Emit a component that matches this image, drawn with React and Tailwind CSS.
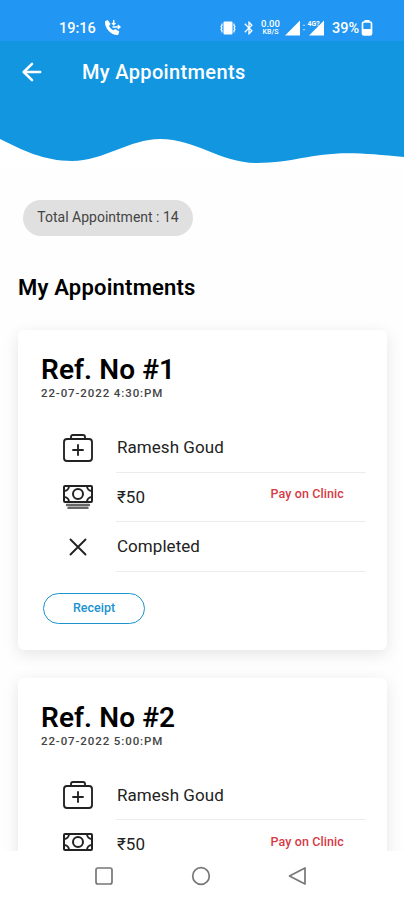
import { ArrowLeft } from 'lucide-react';
import { MdBluetooth } from 'react-icons/md';

const appointments = [
  { id: 1, date: '22-07-2022 4:30:PM', doctor: 'Ramesh Goud', price: '₹50', payment: 'Pay on Clinic', status: 'Completed' },
  { id: 2, date: '22-07-2022 5:00:PM', doctor: 'Ramesh Goud', price: '₹50', payment: 'Pay on Clinic' },
];

function MedkitIcon() {
  return (
    <svg viewBox="0 0 512 512" className="size-8" fill="none" stroke="#222" strokeWidth="30" strokeLinejoin="round">
      <rect x="32" y="112" width="448" height="352" rx="48" />
      <path d="M144 112V80a32 32 0 0 1 32-32h160a32 32 0 0 1 32 32v32" />
      <path strokeLinecap="round" d="M256 208v160M336 288H176" />
    </svg>
  );
}

function CashIcon() {
  return (
    <svg viewBox="0 0 512 512" className="size-8" fill="none" stroke="#222" strokeWidth="32" strokeLinejoin="round">
      <rect x="32" y="80" width="448" height="256" rx="16" />
      <path strokeLinecap="round" stroke="#666" strokeWidth="38" d="M80 384h352M104 430h304" />
      <circle cx="256" cy="208" r="80" />
      <path d="M480 160a80 80 0 0 1-80-80M32 160a80 80 0 0 0 80-80M480 256a80 80 0 0 0-80 80M32 256a80 80 0 0 1 80 80" />
    </svg>
  );
}

function CloseIcon() {
  return (
    <svg viewBox="0 0 512 512" className="size-8" fill="none" stroke="#222" strokeWidth="30" strokeLinecap="round">
      <path d="M376 376 136 136M376 136 136 376" />
    </svg>
  );
}

function CallIcon() {
  return (
    <svg viewBox="0 0 17 17" className="size-[17px]" fill="#fff">
      <path d="M1 2.200 3.800 1 6.500 4.900 5 7C5.800 8.800 7.600 10.500 9.400 11.300L11.200 9.900 15.300 12.400 14.200 16C7.200 16.500.500 9.600 1 2.200Z" />
      <path fill="none" stroke="#fff" strokeWidth="1.400" d="M9.700 1v4.500M8 4l1.700 1.700L11.400 4M8.500 8H16M13.800 6 16 8l-2.200 2" />
    </svg>
  );
}

function StatusBar() {
  return (
    <div className="flex h-[41px] items-end bg-[#2196f3] pb-[5px] pl-[59px] text-white">
      <span className="w-[45px] text-[14.5px] leading-[14px] font-medium">19:16</span>
      <CallIcon />
      <svg viewBox="0 0 16 16" className="ml-[99px] h-4 w-4" fill="#fff" stroke="#fff">
        <rect x="3.5" y="1.5" width="9" height="13" rx="1" stroke="none" />
        <path fill="none" strokeWidth="1.2" d="M2 3.5v2l-1 1 1 1.5-1 1.5 1 1v2M14 3.5v2l1 1-1 1.5 1 1.5-1 1v2" />
      </svg>
      <MdBluetooth className="ml-[5px] size-4" />
      <span className="ml-[3px] flex w-[21px] flex-col items-center font-medium">
        <span className="text-[9.5px] leading-[9px]">0.00</span>
        <span className="text-[7px] leading-[8px]">KB/S</span>
      </span>
      <svg viewBox="0 0 40 16" className="ml-[4px] h-4 w-10" fill="#fff">
        <path d="M0 15.5 15 .5v15zM24 15.5 39 .5v15z" />
        <path d="m17.500 6 1.500-2 1.500 2zM17.500 9 19 11l1.500-2z" opacity=".5" />
        <rect x="23" y="0" width="11" height="6" fill="#2196f3" />
        <text x="22.5" y="6" fontSize="7" fontWeight="700" className="font-[Roboto,sans-serif]">4G?</text>
      </svg>
      <span className="ml-[7px] w-[28px] text-[14.5px] leading-[15px] font-medium">39%</span>
      <svg viewBox="0 0 12 16" className="ml-px h-4 w-3" fill="none" stroke="#fff" strokeWidth="1.7">
        <rect x="1.5" y="2" width="9" height="13" rx="1.5" />
        <path fill="#fff" stroke="none" d="M3.5 0h5v2h-5zM2 9h8v6H2z" />
      </svg>
    </div>
  );
}

function Header() {
  return (
    <header>
      <div className="flex h-[62px] items-center bg-[#1296e0] pl-[18px] text-white">
        <ArrowLeft className="size-7" strokeWidth={2.2} />
        <h1 className="ml-[36px] text-[20px] font-medium tracking-[0.35px]">My Appointments</h1>
      </div>
      <svg viewBox="0 0 404 64" className="block h-16 w-full" fill="#1296e0">
        <path d="M0 0H404V54C382 52 365 50.3 348 50.3C311 50.3 292 60 257 60C220 60 196 36 160 36C130 36 103 58 72 58C44 58 22 47 0 36Z" />
      </svg>
    </header>
  );
}

function Row({ icon, label, children }) {
  return (
    <div className="flex h-[49.5px] items-center">
      <div className="w-[54px]">{icon}</div>
      <div className="flex h-full w-[250px] items-center justify-between border-b border-[#ececec] pr-[22px]">
        <span className="pl-px text-[17px] leading-[14px] tracking-[0.05px] text-[#222]">{label}</span>
        {children}
      </div>
    </div>
  );
}

function AppointmentCard({ appointment }) {
  return (
    <section className="h-[320px] shrink-0 rounded-md bg-white pt-[23px] pl-[23px] shadow-[0_4px_16px_rgba(0,0,0,0.1)]">
      <h3 className="text-[28px] leading-[33px] font-semibold tracking-[0.1px] text-black">Ref. No #{appointment.id}</h3>
      <p className="text-[11.5px] leading-[14px] font-medium tracking-[0.9px] text-[#444]">{appointment.date}</p>
      <div className="mt-[23px] ml-[21px]">
        <Row icon={<MedkitIcon />} label={appointment.doctor} />
        <Row icon={<CashIcon />} label={appointment.price}>
          <span className="mb-[5px] text-[12.5px] leading-4 font-medium tracking-[0.1px] text-[#d63a45]">{appointment.payment}</span>
        </Row>
        {appointment.status && <Row icon={<CloseIcon />} label={appointment.status} />}
      </div>
      {appointment.status && (
        <button className="mt-[21px] ml-[2px] flex h-[31px] w-[102px] items-center justify-center rounded-full border border-[#1b93cf] text-[12.5px] font-medium text-[#1b93cf]">
          Receipt
        </button>
      )}
    </section>
  );
}

function NavBar() {
  return (
    <nav className="flex h-[49px] shrink-0 items-center bg-white pl-[94px]">
      <svg viewBox="0 0 216 20" className="h-5 w-[216px]" fill="none" stroke="#777" strokeWidth="1.7">
        <rect x="2" y="2" width="16" height="16" rx="2" />
        <circle cx="107" cy="10" r="8.3" />
        <path strokeLinejoin="round" d="M195.5 10 211 2v16z" />
      </svg>
    </nav>
  );
}

export default function App() {
  return (
    <div className="flex h-[900px] w-full flex-col overflow-hidden bg-white font-[Roboto,'Noto_Sans',sans-serif]">
      <StatusBar />
      <Header />
      <main className="flex min-h-0 flex-1 flex-col overflow-hidden bg-[#fefefe]">
        <div className="mt-[33px] ml-[23px] flex h-9 w-[170px] shrink-0 items-center justify-center rounded-full bg-[#e0e0e0] pb-px text-[14px] text-[#444]">
          Total Appointment : 14
        </div>
        <h2 className="mt-[37px] ml-[18px] shrink-0 text-[22px] leading-[30px] font-semibold tracking-[0.2px] text-black">
          My Appointments
        </h2>
        <div className="mt-[27px] mr-[17px] ml-[18px] flex flex-col gap-[27.5px]">
          {appointments.map((appointment) => (
            <AppointmentCard key={appointment.id} appointment={appointment} />
          ))}
        </div>
      </main>
      <NavBar />
    </div>
  );
}
